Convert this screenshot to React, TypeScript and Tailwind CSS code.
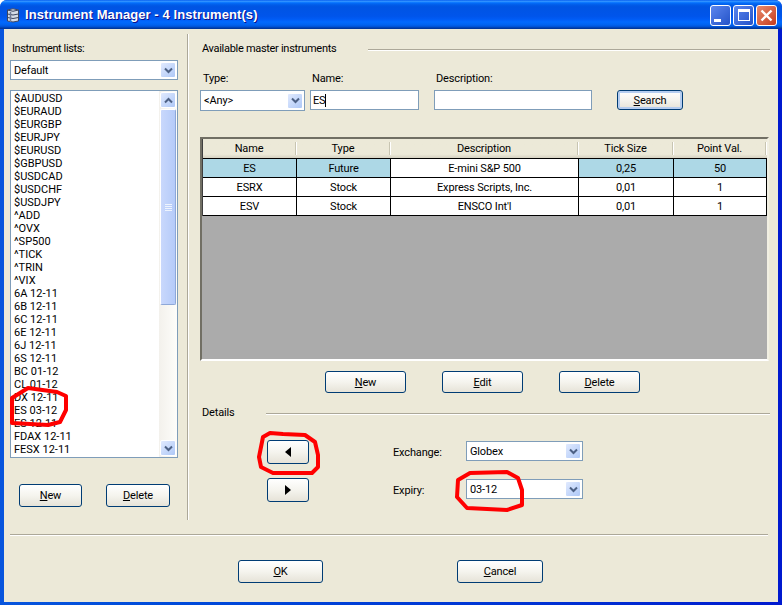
const instruments = [
  "$AUDUSD", "$EURAUD", "$EURGBP", "$EURJPY", "$EURUSD", "$GBPUSD", "$USDCAD", "$USDCHF", "$USDJPY",
  "^ADD", "^OVX", "^SP500", "^TICK", "^TRIN", "^VIX",
  "6A 12-11", "6B 12-11", "6C 12-11", "6E 12-11", "6J 12-11", "6S 12-11",
  "BC 01-12", "CL 01-12", "DX 12-11", "ES 03-12", "ES 12-11", "FDAX 12-11", "FESX 12-11",
];

const rows = [
  { name: "ES", type: "Future", description: "E-mini S&P 500", tick: "0,25", point: "50", selected: true },
  { name: "ESRX", type: "Stock", description: "Express Scripts, Inc.", tick: "0,01", point: "1" },
  { name: "ESV", type: "Stock", description: "ENSCO Int'l", tick: "0,01", point: "1" },
];

const Chevron = ({ up = false }: { up?: boolean }) => (
  <svg width="9" height="7" viewBox="0 0 9 7" className={up ? "rotate-180" : ""}>
    <path d="M1 1.5 L4.5 5 L8 1.5" fill="none" stroke="#4d6185" strokeWidth="2" />
  </svg>
);

const ArrowBox = ({ up = false }: { up?: boolean }) => (
  <div className="flex h-[16px] w-[16px] items-center justify-center rounded-[2px] border border-white bg-gradient-to-br from-[#e1eafe] to-[#aec8f7]">
    <Chevron up={up} />
  </div>
);

const Combo = ({ value, className }: { value: string; className: string }) => (
  <div className={`flex items-center justify-between border border-[#7f9db9] bg-white pl-[3px] pr-[1px] ${className}`}>
    <span>{value}</span>
    <ArrowBox />
  </div>
);

const XpButton = ({ className, children }: { className: string; children: React.ReactNode }) => (
  <button className={`flex items-center justify-center rounded-[3px] border border-[#003c74] bg-gradient-to-b from-white via-[#f5f4ee] to-[#e6e3d8] text-black ${className}`}>
    {children}
  </button>
);

const Underlined = ({ first, rest }: { first: string; rest: string }) => (
  <span>
    <span className="underline">{first}</span>
    {rest}
  </span>
);

const App = () => {
  return (
    <div className="relative flex h-[605px] w-[782px] flex-col overflow-hidden rounded-t-[7px] bg-gradient-to-r from-[#0855dd] to-[#0019cf] font-['Roboto',sans-serif] text-[11px] leading-[13px] tracking-[-0.15px] text-black">
      {/* Title bar */}
      <div className="flex h-[29px] shrink-0 items-center bg-[linear-gradient(#0058ee_0%,#3593ff_4%,#288eff_6%,#127dff_8%,#036ffc_10%,#0262ee_14%,#0057e5_20%,#0054e3_24%,#0055eb_56%,#005bf5_66%,#026afe_76%,#0062ef_86%,#0052d6_92%,#0040ab_96%,#003092_100%)] pl-[5px] pr-[5px]">
        <svg width="16" height="16" viewBox="0 0 16 16">
          <path d="M2.5 3 Q8 0.5 13.5 3 V14 Q8 16 2.5 14 Z" fill="#d5dbe6" stroke="#3c4560" />
          <path d="M2.5 3 Q8 5.5 13.5 3M2.5 7 Q8 9 13.5 7M2.5 10.5 Q8 12.5 13.5 10.5" fill="none" stroke="#3c4560" />
          <path d="M5.5 5 V15" stroke="#6f7a96" strokeWidth="1.5" />
        </svg>
        <span className="ml-[4px] font-['Liberation_Sans',sans-serif] text-[13px] font-bold tracking-[0.08px] text-white [text-shadow:1px_1px_#0f1089]">
          Instrument Manager - 4 Instrument(s)
        </span>
        <div className="ml-auto mt-[1px] flex gap-[2px]">
          <div className="flex h-[21px] w-[21px] items-end rounded-[3px] border border-white bg-gradient-to-br from-[#5c86ee] to-[#2452c8] pb-[3px] pl-[3px]">
            <div className="h-[3px] w-[7px] bg-white" />
          </div>
          <div className="flex h-[21px] w-[21px] items-center justify-center rounded-[3px] border border-white bg-gradient-to-br from-[#5c86ee] to-[#2452c8]">
            <div className="h-[12px] w-[12px] border border-t-[3px] border-white" />
          </div>
          <div className="flex h-[21px] w-[21px] items-center justify-center rounded-[3px] border border-white bg-gradient-to-br from-[#e88a6c] to-[#c4391a]">
            <svg width="13" height="13" viewBox="0 0 13 13">
              <path d="M1.5 1.5 L11.5 11.5 M11.5 1.5 L1.5 11.5" stroke="#fff" strokeWidth="2.4" />
            </svg>
          </div>
        </div>
      </div>

      {/* Dialog body */}
      <div className="mx-[4px] mb-[3px] flex min-h-0 flex-1 flex-col bg-[#ece9d8] pt-[5px]">
        <div className="flex h-[486px] shrink-0">
          {/* Instrument lists */}
          <div className="flex w-[183px] shrink-0 flex-col pl-[6px] pr-[9px]">
            <div className="mt-[8px] pl-[2px] tracking-[-0.4px]">Instrument lists:</div>
            <Combo value="Default" className="mt-[5px] h-[20px] w-[168px]" />
            <div className="mt-[10px] flex h-[368px] w-[168px] border border-[#7f9db9] bg-white">
              <div className="flex-1 overflow-hidden pl-[3px] pt-[1px] tracking-normal">
                {instruments.map((item) => (
                  <div key={item} className="h-[13px] whitespace-nowrap">{item}</div>
                ))}
              </div>
              <div className="flex w-[18px] shrink-0 flex-col bg-gradient-to-r from-[#f3f1ec] to-[#fdfdfa] py-[1px] pl-[1px] pr-[1px]">
                <ArrowBox up />
                <div className="mt-[1px] flex h-[196px] items-center justify-center rounded-[2px] border border-white border-r-[#8ea8d8] border-b-[#8ea8d8] bg-gradient-to-r from-[#c9d8fc] to-[#b5cbf9]">
                  <div className="flex w-[7px] flex-col gap-[1px]">
                    <div className="h-px bg-[#eef4fe]" />
                    <div className="h-px bg-[#eef4fe]" />
                    <div className="h-px bg-[#eef4fe]" />
                    <div className="h-px bg-[#eef4fe]" />
                  </div>
                </div>
                <div className="mt-auto">
                  <ArrowBox />
                </div>
              </div>
            </div>
            <div className="mt-[26px] flex pl-[9px]">
              <XpButton className="h-[23px] w-[63px]"><Underlined first="N" rest="ew" /></XpButton>
              <XpButton className="ml-[24px] h-[23px] w-[64px]"><Underlined first="D" rest="elete" /></XpButton>
            </div>
          </div>

          {/* Vertical divider */}
          <div className="w-[2px] shrink-0 border-l border-[#aca899] bg-white" />

          {/* Master instruments */}
          <div className="flex min-w-0 flex-1 flex-col pl-[11px] pr-[8px]">
            <div className="mt-[8px] flex pl-[2px]">
              <span className="w-[166px] shrink-0 tracking-[-0.3px]">Available master instruments</span>
              <div className="mt-[7px] h-[2px] flex-1 border-t border-[#aca899] bg-white" />
            </div>

            <div className="mt-[17px] flex">
              <div className="w-[110px]">
                <div className="pl-[3px]">Type:</div>
                <Combo value="<Any>" className="mt-[5px] h-[21px] w-[105px]" />
              </div>
              <div className="w-[124px]">
                <div className="pl-[2px]">Name:</div>
                <div className="mt-[5px] flex h-[20px] w-[109px] items-center border border-[#7f9db9] bg-white pl-[2px]">
                  ES<span className="h-[13px] w-px bg-black" />
                </div>
              </div>
              <div className="w-[183px]">
                <div className="pl-[2px]">Description:</div>
                <div className="mt-[5px] h-[20px] w-[158px] border border-[#7f9db9] bg-white" />
              </div>
              <XpButton className="mt-[18px] h-[20px] w-[66px] shadow-[inset_0_0_0_2px_#b5cdf0]"><Underlined first="S" rest="earch" /></XpButton>
            </div>

            {/* Grid */}
            <div className="mt-[26px] h-[224px] w-[569px] shrink-0 border-2 border-[#716f64] border-r-[#f1efe2] border-b-white bg-[#ababab] pl-0">
              <div className="grid w-[565px] grid-cols-[94px_94px_188px_95px_93px] border-l border-[#3f3f3f] text-center">
                {["Name", "Type", "Description", "Tick Size", "Point Val."].map((head) => (
                  <div key={head} className="flex h-[20px] items-center border-b border-black bg-gradient-to-b from-[#ece9d8] from-80% to-[#d6d2c2]">
                    <span className="flex-1 text-center">{head}</span>
                    <span className="h-[13px] w-[2px] shrink-0 border-l border-[#c8c5b2] bg-white" />
                  </div>
                ))}
                {rows.map((row) => {
                  const cols = [row.name, row.type, row.description, row.tick, row.point];
                  return cols.map((col, i) => (
                    <div
                      key={row.name + i}
                      className={`flex h-[19px] items-center justify-center border-r border-b border-black ${row.selected && i !== 2 ? "bg-[#add8e6]" : "bg-white"}`}
                    >
                      {col}
                    </div>
                  ));
                })}
              </div>
            </div>

            <div className="mt-[10px] flex gap-[36px] pl-[125px]">
              <XpButton className="h-[22px] w-[81px]"><Underlined first="N" rest="ew" /></XpButton>
              <XpButton className="h-[22px] w-[81px]"><Underlined first="E" rest="dit" /></XpButton>
              <XpButton className="h-[22px] w-[81px]"><Underlined first="D" rest="elete" /></XpButton>
            </div>

            <div className="mt-[13px] flex pl-[2px]">
              <span className="w-[64px] shrink-0">Details</span>
              <div className="mt-[7px] h-[2px] flex-1 border-t border-[#aca899] bg-white" />
            </div>

            <div className="mt-[21px] flex">
              <div className="ml-[67px] flex w-[126px] flex-col gap-[14px]">
                <XpButton className="h-[24px] w-[42px]">
                  <svg width="6" height="10" viewBox="0 0 6 10"><path d="M6 0V10L0 5Z" /></svg>
                </XpButton>
                <XpButton className="h-[24px] w-[42px]">
                  <svg width="6" height="10" viewBox="0 0 6 10"><path d="M0 0V10L6 5Z" /></svg>
                </XpButton>
              </div>
              <div className="flex w-[190px] flex-col gap-[18px] pt-[1px]">
                <div className="flex items-center">
                  <span className="w-[73px] pt-[2px]">Exchange:</span>
                  <Combo value="Globex" className="h-[20px] w-[117px]" />
                </div>
                <div className="flex items-center">
                  <span className="w-[73px] pt-[2px]">Expiry:</span>
                  <Combo value="03-12" className="h-[20px] w-[117px]" />
                </div>
              </div>
            </div>
          </div>
        </div>

        {/* Footer */}
        <div className="ml-[6px] mr-[10px] mt-[14px] h-[2px] border-t border-[#aca899] bg-white" />
        <div className="mt-[24px] flex pl-[234px]">
          <XpButton className="h-[23px] w-[85px]"><Underlined first="O" rest="K" /></XpButton>
          <XpButton className="ml-[134px] h-[23px] w-[86px]"><Underlined first="C" rest="ancel" /></XpButton>
        </div>
      </div>

      {/* Red marker annotations */}
      <svg className="pointer-events-none absolute left-0 top-0" width="782" height="605" fill="none" stroke="#ff0000" strokeWidth="4" strokeLinejoin="round">
        <path d="M12 423 L12 398 L28 388 L57 392 L66 396 L66 410 L60 422 L48 425 Z" />
        <path d="M270 433 L263 437 L259 457 L261 467 L273 473 L312 473 L318 467 L318 455 L315 442 L305 435 L283 434 Z" />
        <path d="M470 473 L458 480 L457 497 L467 508 L507 510 L522 505 L522 490 L518 478 L507 472 Z" />
      </svg>
    </div>
  );
};

export default App;
